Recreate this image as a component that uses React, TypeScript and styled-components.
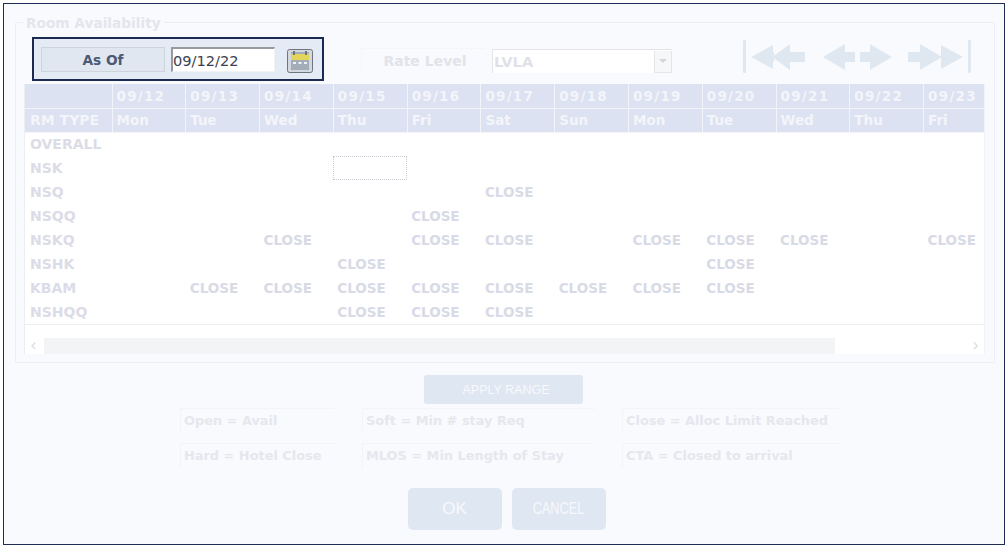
import styled, { createGlobalStyle } from 'styled-components'

const GlobalStyle = createGlobalStyle`
  html, body {
    margin: 0;
    padding: 0;
    background: #fff;
  }

  * {
    box-sizing: border-box;
  }
`

const Frame = styled.div`
  width: 1002px;
  height: 542px;
  margin: 3px 0 0 3px;
  padding: 10px 10px 0 11px;
  display: flex;
  flex-direction: column;
  align-items: flex-start;
  border: 1px solid #1f2d55;
  background: #f9fafd;
  font-family: 'DejaVu Sans', Verdana, sans-serif;
`

const Group = styled.fieldset`
  width: 980px;
  height: 349px;
  margin: 0;
  padding: 7px 8px 0;
  border: 1px solid #eceef4;
  border-radius: 2px;
`

const Legend = styled.legend`
  margin-left: 0;
  padding: 0 3px 0 2px;
  height: 16px;
  line-height: 18px;
  font-size: 13.7px;
  font-weight: 700;
  color: #e4e5ec;
`

const Toolbar = styled.div`
  height: 47px;
  display: flex;
  align-items: flex-start;
`

const AsOfBox = styled.div`
  width: 292px;
  height: 44px;
  margin-left: 8px;
  padding: 8px 0 0 7px;
  display: flex;
  align-items: flex-start;
  border: 2px solid #1b2a52;
  background: #e5ebf4;
`

const AsOfLabel = styled.div`
  width: 124px;
  height: 25px;
  display: flex;
  align-items: center;
  justify-content: center;
  border: 1px solid #cfd4dc;
  background: #e1e7f0;
  font-size: 13.7px;
  font-weight: 700;
  color: #4b5a74;
`

const DateInput = styled.input`
  width: 104px;
  height: 25px;
  margin-left: 6px;
  padding: 0;
  border: 1px solid #f1f3f7;
  border-top: 2px solid #96999e;
  border-left: 2px solid #96999e;
  outline: none;
  background: #fff;
  font-family: 'DejaVu Sans', Verdana, sans-serif;
  font-size: 14.6px;
  color: #3a4252;
`

const CalendarButton = styled.button`
  width: 26px;
  height: 24px;
  margin: 2px 0 0 12px;
  padding: 0;
  display: flex;
  border: none;
  background: none;
`

const RateLabel = styled.div`
  width: 124px;
  height: 25px;
  margin: 11px 0 0 37px;
  padding: 0 0 0 4px;
  display: flex;
  align-items: center;
  justify-content: center;
  border: 1px solid #f4f5f9;
  border-right-color: transparent;
  border-bottom-color: transparent;
  font-size: 14px;
  font-weight: 700;
  color: #e2e3ea;
`

const RateSelect = styled.div`
  width: 180px;
  height: 24px;
  margin: 12px 0 0 7px;
  padding-left: 1px;
  display: flex;
  align-items: center;
  justify-content: space-between;
  border: 1px solid #e3e5e8;
  border-right: none;
  border-bottom: none;
  background: #fff;
  font-size: 14.6px;
  font-weight: 700;
  color: #dfe1e8;
`

const SelectArrow = styled.div`
  width: 18px;
  height: 22px;
  display: flex;
  align-items: center;
  justify-content: center;
  border: 1px solid #e5e6e9;
  border-top: none;
  background: #f6f7f9;

  &::after {
    content: '';
    border-left: 4px solid transparent;
    border-right: 4px solid transparent;
    border-top: 4px solid #d5d6da;
  }
`

const NavBar = styled.div`
  width: 230px;
  height: 34px;
  margin: 3px 0 0 70px;
  display: flex;
  align-items: center;
`

const NavBox = styled.div`
  width: 100%;
  height: 34px;
`

const Panel = styled.div`
  width: 961px;
  height: 270px;
  overflow: hidden;
  border-left: 1.5px solid #eceef3;
  border-right: 1px solid #f2f3f7;
  background: #fff;
`

const Grid = styled.table`
  width: 973px;
  table-layout: fixed;
  border-collapse: collapse;
  font-size: 13.5px;
  font-weight: 700;
`

const HeadCell = styled.th`
  height: 24px;
  padding: 0 0 0 4px;
  border-right: 1px solid #f2f4fa;
  border-bottom: 1px solid #f2f4fa;
  background: #dce2f1;
  color: #f3f5fa;
  text-align: left;
  font-weight: 700;
  white-space: nowrap;

  &:first-child {
    width: 87px;
    padding-left: 5px;
    font-size: 14px;
  }
`

const DateText = styled.span`
  letter-spacing: 1.25px;
`

const RowName = styled.td`
  height: 24px;
  padding: 0 0 0 5px;
  color: #dcdce8;
  font-size: 14px;
`

const Cell = styled.td<{ $focused?: boolean }>`
  height: 24px;
  padding: 0 0 0 4px;
  color: #d8dae6;
  text-align: left;
  white-space: nowrap;
  outline: ${(p) => (p.$focused ? '1px dotted #c9ccd2' : 'none')};
  outline-offset: -1px;
`

const ScrollArea = styled.div`
  height: 31px;
  padding: 13px 0 0 19px;
  display: flex;
  align-items: flex-start;
  border-top: 1.5px solid #eceef2;
  position: relative;
`

const ScrollThumb = styled.div`
  width: 791px;
  height: 16px;
  background: #f3f4f6;
`

const ScrollEnd = styled.span<{ $right?: boolean }>`
  position: absolute;
  top: 10px;
  ${(p) => (p.$right ? 'right: 5px;' : 'left: 5px;')}
  font-size: 17px;
  line-height: 20px;
  color: #dcdde2;
`

const ApplyRow = styled.div`
  width: 980px;
  margin-top: 12px;
  padding-right: 4px;
  display: flex;
  justify-content: center;
`

const ActionButton = styled.button`
  width: 94px;
  height: 42px;
  padding: 0;
  border: none;
  border-radius: 5px;
  background: #dfe7f2;
  color: #f7f9fc;
  font-family: 'Liberation Sans', sans-serif;
  font-size: 17px;
`

const CondensedLabel = styled.span`
  display: inline-block;
  font-size: 16.5px;
  transform: scaleX(0.77);
`

const ApplyButton = styled(ActionButton)`
  width: 159px;
  height: 29px;
  padding-left: 6px;
  border-radius: 3px;
  font-size: 12.5px;
`

const KeyGrid = styled.div`
  width: 660px;
  margin: 4px 0 0 165px;
  display: grid;
  grid-template-columns: 155px 233px 218px;
  column-gap: 27px;
  row-gap: 9px;
`

const KeyItem = styled.div`
  height: 26px;
  padding: 0 0 2px 3px;
  display: flex;
  align-items: center;
  border: 1px solid #f3f4f8;
  border-right-color: transparent;
  border-bottom-color: transparent;
  font-size: 12.9px;
  font-weight: 700;
  color: #e6e7ed;
  white-space: nowrap;
`

const ActionRow = styled.div`
  width: 980px;
  margin-top: 19px;
  padding-left: 3px;
  display: flex;
  justify-content: center;
  gap: 10px;
`

const dates = ['09/12', '09/13', '09/14', '09/15', '09/16', '09/17', '09/18', '09/19', '09/20', '09/21', '09/22', '09/23']
const days = ['Mon', 'Tue', 'Wed', 'Thu', 'Fri', 'Sat', 'Sun', 'Mon', 'Tue', 'Wed', 'Thu', 'Fri']

const rows: { name: string; closed: number[] }[] = [
  { name: 'OVERALL', closed: [] },
  { name: 'NSK', closed: [] },
  { name: 'NSQ', closed: [5] },
  { name: 'NSQQ', closed: [4] },
  { name: 'NSKQ', closed: [2, 4, 5, 7, 8, 9, 11] },
  { name: 'NSHK', closed: [3, 8] },
  { name: 'KBAM', closed: [1, 2, 3, 4, 5, 6, 7, 8] },
  { name: 'NSHQQ', closed: [3, 4, 5] },
]

function CalendarIcon() {
  return (
    <svg width="26" height="24" viewBox="0 0 26 24">
      <rect x="0.5" y="0.5" width="25" height="23" rx="2" fill="#d3d8df" stroke="#6f7680" />
      <rect x="4" y="3" width="18" height="18" fill="#a3adb9" />
      <rect x="4" y="5" width="18" height="6" fill="#e3d45a" />
      <rect x="6" y="2" width="2" height="4" fill="#6f7680" />
      <rect x="18" y="2" width="2" height="4" fill="#6f7680" />
      <rect x="6" y="13" width="3" height="2" fill="#eef0f3" />
      <rect x="11.5" y="13" width="3" height="2" fill="#eef0f3" />
      <rect x="17" y="13" width="3" height="2" fill="#eef0f3" />
    </svg>
  )
}

function NavArrows() {
  const fill = '#dfe8f1'
  return (
    <NavBox>
      <svg width="230" height="34" viewBox="0 0 230 34">
        <rect x="1" y="0" width="3" height="33" rx="1" fill={fill} />
        <path d="M9 17 L31 5 V12 L32 12 L32 22 L31 22 V29 Z" fill={fill} />
        <path d="M30 17 L48 4 V12 H63 V22 H48 V30 Z" fill={fill} />
        <path d="M81 17 L103 4 V12 H113 V22 H103 V30 Z" fill={fill} />
        <path d="M150 17 L128 4 V12 H118 V22 H128 V30 Z" fill={fill} />
        <path d="M200 17 L178 4 V12 H166 V22 H178 V30 Z" fill={fill} />
        <path d="M221 17 L199 5 V29 Z" fill={fill} />
        <rect x="226" y="0" width="3" height="33" rx="1" fill={fill} />
      </svg>
    </NavBox>
  )
}

export default function App() {
  return (
    <>
      <GlobalStyle />
      <Frame>
        <Group>
          <Legend>Room Availability</Legend>
          <Toolbar>
            <AsOfBox>
              <AsOfLabel>As Of</AsOfLabel>
              <DateInput readOnly value="09/12/22" />
              <CalendarButton>
                <CalendarIcon />
              </CalendarButton>
            </AsOfBox>
            <RateLabel>Rate Level</RateLabel>
            <RateSelect>
              LVLA
              <SelectArrow />
            </RateSelect>
            <NavBar>
              <NavArrows />
            </NavBar>
          </Toolbar>
          <Panel>
            <Grid>
              <thead>
                <tr>
                  <HeadCell />
                  {dates.map((d) => (
                    <HeadCell key={d}>
                      <DateText>{d}</DateText>
                    </HeadCell>
                  ))}
                </tr>
                <tr>
                  <HeadCell>RM TYPE</HeadCell>
                  {days.map((d, i) => (
                    <HeadCell key={i}>{d}</HeadCell>
                  ))}
                </tr>
              </thead>
              <tbody>
                {rows.map((row) => (
                  <tr key={row.name}>
                    <RowName>{row.name}</RowName>
                    {dates.map((d, i) => (
                      <Cell key={d} $focused={row.name === 'NSK' && i === 3}>
                        {row.closed.includes(i) ? 'CLOSE' : ''}
                      </Cell>
                    ))}
                  </tr>
                ))}
              </tbody>
            </Grid>
            <ScrollArea>
              <ScrollEnd>‹</ScrollEnd>
              <ScrollThumb />
              <ScrollEnd $right>›</ScrollEnd>
            </ScrollArea>
          </Panel>
        </Group>
        <ApplyRow>
          <ApplyButton>APPLY RANGE</ApplyButton>
        </ApplyRow>
        <KeyGrid>
          <KeyItem>Open = Avail</KeyItem>
          <KeyItem>Soft = Min # stay Req</KeyItem>
          <KeyItem>Close = Alloc Limit Reached</KeyItem>
          <KeyItem>Hard = Hotel Close</KeyItem>
          <KeyItem>MLOS = Min Length of Stay</KeyItem>
          <KeyItem>CTA = Closed to arrival</KeyItem>
        </KeyGrid>
        <ActionRow>
          <ActionButton>OK</ActionButton>
          <ActionButton>
            <CondensedLabel>CANCEL</CondensedLabel>
          </ActionButton>
        </ActionRow>
      </Frame>
    </>
  )
}
